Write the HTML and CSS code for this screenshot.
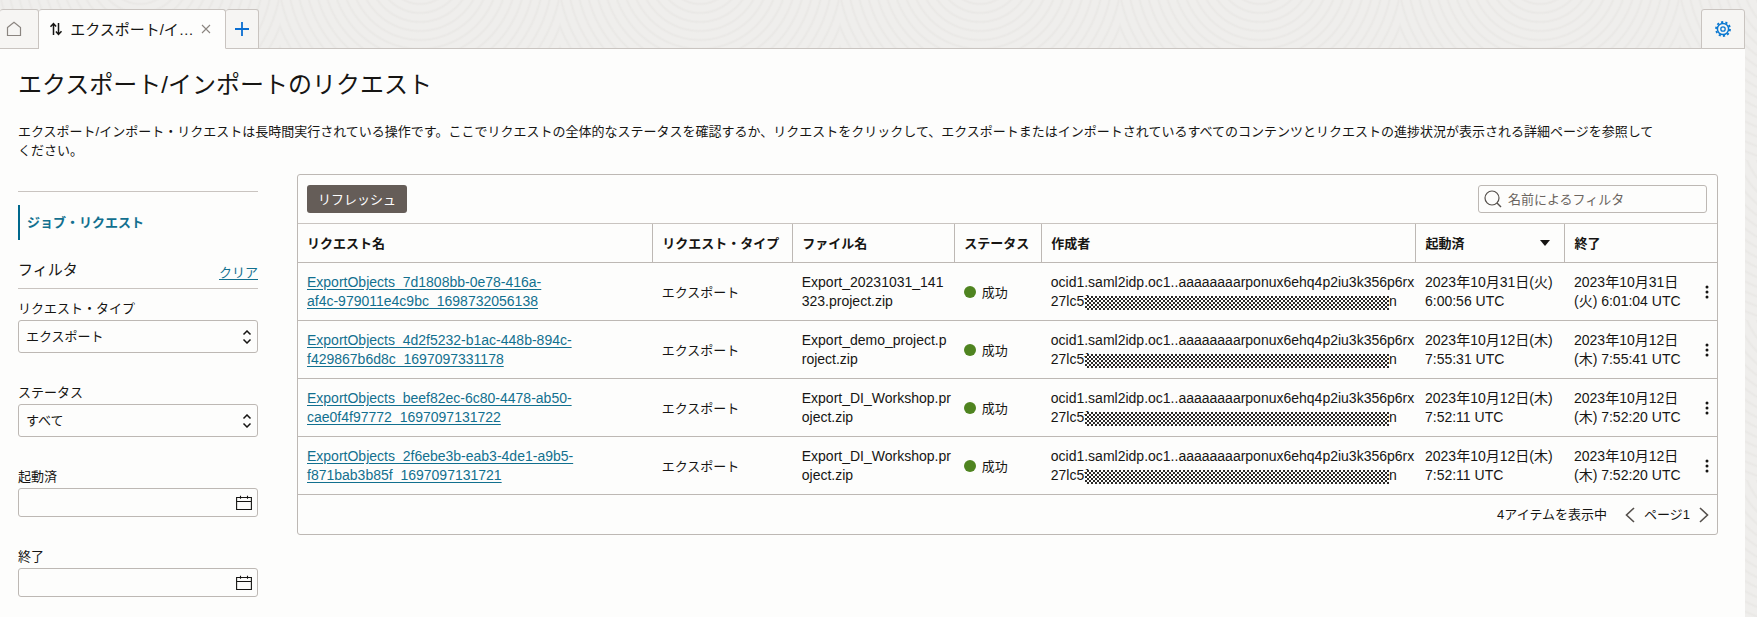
FILE: index.html
```html
<!DOCTYPE html>
<html lang="ja">
<head>
<meta charset="utf-8">
<title>エクスポート/インポートのリクエスト</title>
<link rel="stylesheet" href="styles.css">
</head>
<body>
<div class="shell">
  <header class="tabbar">
    <button class="tab tab-home" type="button">
      <svg width="16" height="16" viewBox="0 0 16 16"><path d="M1.500 6.500 8 1.200l6.500 5.300V14.500h-13z" fill="none" stroke="#8b8580" stroke-width="1.200"/></svg>
    </button>
    <div class="tab tab-active">
      <svg width="14" height="14" viewBox="0 0 14 14"><path d="M4.500 13V1.500M1.500 4.800l3-3.300 2.600 2.900M9.500 1v11.500M6.900 9.600l2.600 2.900 3-3.300" fill="none" stroke="#161513" stroke-width="1.500"/></svg>
      <span class="tab-title">エクスポート/イ…</span>
      <button class="close" type="button"><svg width="10" height="10" viewBox="0 0 10 10"><path d="M1 1l8 8M9 1 1 9" fill="none" stroke="#8b8580" stroke-width="1.100"/></svg></button>
    </div>
    <button class="tab tab-add" type="button">
      <svg width="16" height="16" viewBox="0 0 16 16"><path d="M8 1v14M1 8h14" fill="none" stroke="#0a6ed1" stroke-width="1.800"/></svg>
    </button>
    <button class="tab tab-gear" type="button">
      <svg width="16" height="16" viewBox="0 0 16 16" fill="none" stroke="#0a78d1"><circle cx="8" cy="8" r="5.600" stroke-width="1.500"/><circle cx="8" cy="8" r="7" stroke-width="1.800" stroke-dasharray="2.200 2.198"/><circle cx="8" cy="8" r="2.200" stroke-width="1.300"/></svg>
    </button>
  </header>

  <main class="page">
    <h1>エクスポート/インポートのリクエスト</h1>
    <p class="lead">エクスポート/インポート・リクエストは長時間実行されている操作です。ここでリクエストの全体的なステータスを確認するか、リクエストをクリックして、エクスポートまたはインポートされているすべてのコンテンツとリクエストの進捗状況が表示される詳細ページを参照して<br>ください。</p>

    <div class="columns">
      <aside class="sidebar">
        <nav class="side-nav"><a href="#">ジョブ・リクエスト</a></nav>
        <div class="filter-head"><h2>フィルタ</h2><a href="#">クリア</a></div>
        <form class="filters">
          <div class="field">
            <label for="type">リクエスト・タイプ</label>
            <div class="control">
              <select id="type"><option>エクスポート</option></select>
              <svg class="mark" width="10" height="14" viewBox="0 0 10 14"><path d="M1.500 4.500 5 1l3.500 3.500M1.500 9.500 5 13l3.500-3.500" fill="none" stroke="#161513" stroke-width="1.500"/></svg>
            </div>
          </div>
          <div class="field">
            <label for="status">ステータス</label>
            <div class="control">
              <select id="status"><option>すべて</option></select>
              <svg class="mark" width="10" height="14" viewBox="0 0 10 14"><path d="M1.500 4.500 5 1l3.500 3.500M1.500 9.500 5 13l3.500-3.500" fill="none" stroke="#161513" stroke-width="1.500"/></svg>
            </div>
          </div>
          <div class="field">
            <label for="started">起動済</label>
            <div class="control">
              <input id="started" type="text">
              <svg class="mark" width="16" height="16" viewBox="0 0 16 16"><path d="M.6 2.500h14.800v12H.6zM.6 6.500h14.800M4.500.8v3M11.500.8v3" fill="none" stroke="#161513" stroke-width="1.100"/></svg>
            </div>
          </div>
          <div class="field">
            <label for="ended">終了</label>
            <div class="control">
              <input id="ended" type="text">
              <svg class="mark" width="16" height="16" viewBox="0 0 16 16"><path d="M.6 2.500h14.800v12H.6zM.6 6.500h14.800M4.500.8v3M11.500.8v3" fill="none" stroke="#161513" stroke-width="1.100"/></svg>
            </div>
          </div>
        </form>
      </aside>

      <section class="panel">
        <div class="toolbar">
          <button class="refresh" type="button">リフレッシュ</button>
          <label class="search">
            <svg width="18" height="18" viewBox="0 0 18 18"><circle cx="8" cy="8" r="7" fill="none" stroke="#55504c" stroke-width="1.200"/><path d="M13 13l4 4" stroke="#55504c" stroke-width="1.400"/></svg>
            <input type="text" placeholder="名前によるフィルタ">
          </label>
        </div>
        <table>
          <colgroup><col class="c-name"><col class="c-type"><col class="c-file"><col class="c-status"><col class="c-author"><col class="c-start"><col class="c-end"><col class="c-menu"></colgroup>
          <thead>
            <tr>
              <th>リクエスト名</th><th>リクエスト・タイプ</th><th>ファイル名</th><th>ステータス</th><th>作成者</th>
              <th><span class="sorted">起動済<svg width="10" height="6" viewBox="0 0 10 6"><path d="M0 0h10L5 6z" fill="#161513"/></svg></span></th>
              <th colspan="2">終了</th>
            </tr>
          </thead>
          <tbody>
            <tr>
              <td><a href="#">ExportObjects_7d1808bb-0e78-416a-<br>af4c-979011e4c9bc_1698732056138</a></td>
              <td class="jp">エクスポート</td>
              <td>Export_20231031_141<br>323.project.zip</td>
              <td class="jp"><span class="status"><i class="dot"></i>成功</span></td>
              <td>ocid1.saml2idp.oc1..aaaaaaaarponux6ehq4p2iu3k356p6rx<br>27lc5f<span class="redacted"></span>n</td>
              <td>2023年10月31日(火)<br>6:00:56 UTC</td>
              <td>2023年10月31日<br>(火) 6:01:04 UTC</td>
              <td class="menu"><button type="button"><svg width="4" height="14" viewBox="0 0 4 14" fill="#161513"><circle cx="2" cy="2" r="1.500"/><circle cx="2" cy="7" r="1.500"/><circle cx="2" cy="12" r="1.500"/></svg></button></td>
            </tr>
            <tr>
              <td><a href="#">ExportObjects_4d2f5232-b1ac-448b-894c-<br>f429867b6d8c_1697097331178</a></td>
              <td class="jp">エクスポート</td>
              <td>Export_demo_project.p<br>roject.zip</td>
              <td class="jp"><span class="status"><i class="dot"></i>成功</span></td>
              <td>ocid1.saml2idp.oc1..aaaaaaaarponux6ehq4p2iu3k356p6rx<br>27lc5f<span class="redacted"></span>n</td>
              <td>2023年10月12日(木)<br>7:55:31 UTC</td>
              <td>2023年10月12日<br>(木) 7:55:41 UTC</td>
              <td class="menu"><button type="button"><svg width="4" height="14" viewBox="0 0 4 14" fill="#161513"><circle cx="2" cy="2" r="1.500"/><circle cx="2" cy="7" r="1.500"/><circle cx="2" cy="12" r="1.500"/></svg></button></td>
            </tr>
            <tr>
              <td><a href="#">ExportObjects_beef82ec-6c80-4478-ab50-<br>cae0f4f97772_1697097131722</a></td>
              <td class="jp">エクスポート</td>
              <td>Export_DI_Workshop.pr<br>oject.zip</td>
              <td class="jp"><span class="status"><i class="dot"></i>成功</span></td>
              <td>ocid1.saml2idp.oc1..aaaaaaaarponux6ehq4p2iu3k356p6rx<br>27lc5f<span class="redacted"></span>n</td>
              <td>2023年10月12日(木)<br>7:52:11 UTC</td>
              <td>2023年10月12日<br>(木) 7:52:20 UTC</td>
              <td class="menu"><button type="button"><svg width="4" height="14" viewBox="0 0 4 14" fill="#161513"><circle cx="2" cy="2" r="1.500"/><circle cx="2" cy="7" r="1.500"/><circle cx="2" cy="12" r="1.500"/></svg></button></td>
            </tr>
            <tr>
              <td><a href="#">ExportObjects_2f6ebe3b-eab3-4de1-a9b5-<br>f871bab3b85f_1697097131721</a></td>
              <td class="jp">エクスポート</td>
              <td>Export_DI_Workshop.pr<br>oject.zip</td>
              <td class="jp"><span class="status"><i class="dot"></i>成功</span></td>
              <td>ocid1.saml2idp.oc1..aaaaaaaarponux6ehq4p2iu3k356p6rx<br>27lc5f<span class="redacted"></span>n</td>
              <td>2023年10月12日(木)<br>7:52:11 UTC</td>
              <td>2023年10月12日<br>(木) 7:52:20 UTC</td>
              <td class="menu"><button type="button"><svg width="4" height="14" viewBox="0 0 4 14" fill="#161513"><circle cx="2" cy="2" r="1.500"/><circle cx="2" cy="7" r="1.500"/><circle cx="2" cy="12" r="1.500"/></svg></button></td>
            </tr>
          </tbody>
        </table>
        <footer class="pager">
          <span class="count">4アイテムを表示中</span>
          <button type="button"><svg width="10" height="16" viewBox="0 0 10 16"><path d="M9 1 1.500 8 9 15" fill="none" stroke="#55504c" stroke-width="1.600"/></svg></button>
          <span>ページ1</span>
          <button type="button"><svg width="10" height="16" viewBox="0 0 10 16"><path d="M1 1l7.500 7L1 15" fill="none" stroke="#55504c" stroke-width="1.600"/></svg></button>
        </footer>
      </section>
    </div>
  </main>
</div>
</body>
</html>
```
FILE: styles.css
```css
* { box-sizing: border-box; }

body {
  margin: 0;
  min-height: 100vh;
  color: #161513;
  font: 13px/19px "Liberation Sans", "Noto Sans CJK JP", sans-serif;
  background-color: #efeeec;
  background-image: repeating-radial-gradient(circle at 140px -30px, transparent 0 5px, rgba(225, 223, 220, .4) 7px, transparent 9px);
  background-size: 280px 160px;
}

button {
  padding: 0;
  border: 0;
  background: none;
  color: inherit;
  font: inherit;
}

svg { display: block; flex: none; }
a { color: #12708f; text-underline-offset: 2px; }

.shell {
  display: flex;
  flex-direction: column;
  min-height: 100vh;
  padding: 9px 12px 0 0;
}

/* Tab strip */
.tabbar { display: flex; height: 40px; box-shadow: inset 0 -1px #c9c4c0; }

.tab {
  display: flex;
  align-items: center;
  justify-content: center;
  border: 1px solid #c9c4c0;
  border-radius: 3px 3px 0 0;
  background: #f6f5f3;
}

.tab-home { width: 39px; border-left: 0; padding-right: 10px; }
.tab-active {
  gap: 7px;
  width: 187px;
  padding-right: 4px;
  border-left: 0;
  border-bottom-color: #fdfdfc;
  background: #fdfdfc;
}
.tab-title { font-size: 15px; white-space: nowrap; }
.tab-add { width: 33px; border-left: 0; }
.tab-gear { width: 44px; margin-left: auto; }

/* Page */
.page { flex: 1; padding: 18px 27px 20px 18px; background: #fdfdfc; }
h1 { margin: 0; font-size: 24px; line-height: 36px; font-weight: 400; }
.lead { margin: 19px 0 14px; }
.columns { display: flex; align-items: flex-start; gap: 39px; }

/* Sidebar */
.sidebar { flex: 0 0 240px; margin-top: 17px; border-top: 1px solid #c9c4c0; }
.side-nav { margin: 13px 0 0; border-left: 2px solid #00688c; padding: 8px 7px; }
.side-nav a { font-weight: 700; text-decoration: none; }
.filter-head {
  display: flex;
  align-items: flex-end;
  justify-content: space-between;
  height: 49px;
  border-bottom: 1px solid #c9c4c0;
  padding-bottom: 6px;
}
h2 { margin: 0 0 2px; font-size: 15px; line-height: 20px; font-weight: 400; }
.filters { display: flex; flex-direction: column; gap: 30px; padding-top: 10px; }
.field { display: flex; flex-direction: column; gap: 2px; }
.control { position: relative; }

.control select,
.control input {
  display: block;
  width: 100%;
  border: 1px solid #bdb8b4;
  border-radius: 3px;
  background: #fdfdfc;
  color: inherit;
  font: inherit;
}
.control select { appearance: none; height: 33px; padding: 0 7px; }
.control input { height: 29px; padding: 0 28px 0 7px; }
.mark { position: absolute; top: 0; bottom: 0; right: 6px; margin: auto 0; pointer-events: none; }

/* Request list */
.panel { flex: 1; min-width: 0; border: 1px solid #bdb8b4; border-radius: 3px; }
.toolbar { display: flex; align-items: center; justify-content: space-between; padding: 10px 10px 10px 9px; }
.refresh { height: 28px; padding: 0 11px; border-radius: 3px; background: #655d58; color: #fff; }
.search {
  display: flex;
  align-items: center;
  gap: 6px;
  width: 229px;
  height: 28px;
  padding: 0 5px;
  border: 1px solid #bdb8b4;
  border-radius: 3px;
}
.search input { flex: 1; min-width: 0; padding: 0; border: 0; outline: 0; background: none; font: inherit; }
.search input::placeholder { color: #6b6560; opacity: 1; }

table { width: 100%; table-layout: fixed; border-collapse: collapse; }
th {
  height: 39px;
  padding: 0 0 0 9px;
  border-top: 1px solid #c9c4c0;
  border-left: 1px solid #bdb8b4;
  text-align: left;
  white-space: nowrap;
}
th:first-child { border-left: 0; }
td { padding: 10px 0 9px 9px; border-top: 1px solid #bdb8b4; font-size: 14px; white-space: nowrap; }
td.jp { font-size: 13px; }
.c-name { width: 25%; }
.c-type { width: 140px; }
.c-file { width: 162px; }
.c-status { width: 87px; }
.c-start { width: 149px; }
.c-end { width: 132px; }
.c-menu { width: 20px; }

.sorted { display: flex; align-items: center; justify-content: space-between; padding-right: 14px; }
.status { display: flex; align-items: center; gap: 6px; }
.dot { width: 12px; height: 12px; border-radius: 50%; background: #4f8420; }
.redacted {
  display: inline-block;
  width: 304px;
  height: 14px;
  margin-left: -3px;
  vertical-align: -4px;
  background: repeating-conic-gradient(#2b2927 0 25%, #fdfdfc 0 50%) 0 0 / 4px 4px;
}
td.menu { padding: 0 0 0 8px; }
td.menu button { display: block; }

.pager { display: flex; align-items: center; height: 40px; padding: 0 8px; gap: 9px; border-top: 1px solid #bdb8b4; }
.count { margin: 0 9px 0 auto; }
```
